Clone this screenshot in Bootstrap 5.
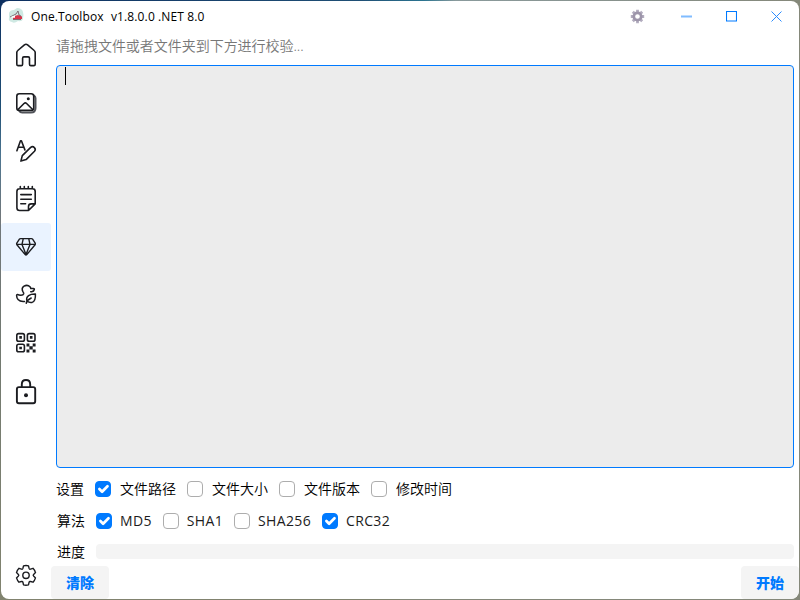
<!DOCTYPE html>
<html lang="zh-CN">
<head>
<meta charset="utf-8">
<meta name="viewport" content="width=device-width, initial-scale=1">
<title>One.Toolbox</title>
<link href="https://cdn.jsdelivr.net/npm/bootstrap@5.3.0/dist/css/bootstrap.min.css" rel="stylesheet">
<style>
:root { --accent: #007aff; }
body { width: 800px; height: 600px; padding: 1px; overflow: hidden; color: #000;
  font: 350 14px/20px "Noto Sans", "Noto Sans CJK SC", sans-serif;
  background: linear-gradient(90deg, #0d2f60, #1f4f75 45%, #2b7490 53%, #8a9a9c 57%, #85887a) top / 100% 1px no-repeat,
    linear-gradient(90deg, transparent 50%, #85887a 50%), linear-gradient(#0d2f60, #1f4f75 18%, #4d7590 26%, #70777b 36%, #737a70 60%, #81836f); }
.app-window { height: 598px; background: #fff; border-radius: 8px; }
.title-bar { height: 30px; padding-left: 7px; font: 400 12px/16px "Open Sans", sans-serif; color: #000; }
.title-name { width: 73px; margin-left: 7px; padding-top: 1px; letter-spacing: .1px; }
.title-version { margin-left: 7px; padding-top: 1px; letter-spacing: .12px; }
.caption-btn { width: 45px; height: 30px; padding: 0; border: 0; }
.caption-gear { margin-right: 4px; }
.side-nav { width: 50px; }
.side-link { height: 48px; color: #1b1c20; border-radius: 3px; }
.side-link.active { background: #eaf3ff; }
.side-link svg { fill: none; stroke: currentColor; stroke-width: 1.6; stroke-linecap: round; stroke-linejoin: round; overflow: visible; }
.side-link.active svg { stroke-width: 1.4; }
.side-link .solid { fill: currentColor; stroke: none; }
.page-body { padding: 0 5px; }
.hint-text { height: 34px; padding-top: 5px; color: #777; letter-spacing: -.03px; }
.drop-box { height: 403px; padding: 0 8px; resize: none; background: #ececec; border: 1px solid var(--accent); border-radius: 4px; }
.drop-wrap::after { content: ""; position: absolute; left: 9px; top: 2px; width: 1px; height: 18px; background: #000; }
.option-row { height: 32px; padding-left: 1px; }
.option-row.first { margin-top: 5px; padding-left: 0; }
.row-title { width: 39px; }
.option-row .form-check-input { width: 16px; height: 16px; margin: 0 9px 0 0; border: 1px solid #adadad; border-radius: 4px; }
.option-row .form-check-input:checked { background-color: var(--accent); border-color: var(--accent);
  background-size: 18px 18px; }
.opt { margin-right: 11px; }
.latin { font-family: "Open Sans", sans-serif; font-weight: 400; color: #1c1c1c; letter-spacing: .35px; }
.option-row .latin .form-check-input { margin-right: 8px; }
.progress-row { height: 29px; padding-left: 1px; }
.progress-row .progress { height: 15px; background: #f4f4f4; border-radius: 4px; }
.action-btn { width: 58px; height: 33px; padding: 1px 0 0; border: 0; border-radius: 4px; background: #f4f4f4; color: var(--accent); font-size: 14px; line-height: 20px; font-weight: 900; }
.action-btn:hover { background: #ececec; color: var(--accent); }
.action-btn.end { border-bottom-right-radius: 8px; }
</style>
<script src="https://cdn.jsdelivr.net/npm/bootstrap@5.3.0/dist/js/bootstrap.bundle.min.js"></script>
</head>
<body>
<div class="app-window d-flex flex-column overflow-hidden">
  <header class="title-bar d-flex align-items-center flex-shrink-0">
    <svg width="16" height="16" viewBox="0 0 16 16"><path d="M1 5Q2 2 6 2L9 0q5 0 6 4 1 3 0 7-1 3-5 2-4 3-6 1Q0 13 1 10Z" fill="#cfe9e3"/><path d="M5 8.500 10 7l4 1.500V11H5Z" fill="#d8344a"/><path d="m2 9 6-3 2-3 1 4 2 1M5 11.500h8" fill="none" stroke="#66505a" stroke-width=".8"/><path d="M3.500 8.500 7 7.500v2.300H3.500Z" fill="#fff"/></svg>
    <span class="title-name text-nowrap">One.Toolbox</span>
    <span class="title-version text-nowrap">v1.8.0.0 .NET 8.0</span>
    <div class="d-flex ms-auto">
      <button class="btn caption-btn caption-gear d-flex align-items-center justify-content-center" aria-label="选项"><svg width="15" height="15" viewBox="0 0 15 15"><g stroke="#b3adbf" stroke-width="2.8"><path d="M7.500.8v13.400M.8 7.500h13.400M2.800 2.800l9.400 9.400M12.200 2.800l-9.400 9.400"/></g><circle cx="7.500" cy="7.500" r="3.700" fill="#fff" stroke="#9d95aa" stroke-width="2.700"/></svg></button>
      <button class="btn caption-btn d-flex align-items-center justify-content-center" aria-label="最小化"><svg width="11" height="11"><path d="M0 5.500h11" stroke="#80bcff" stroke-width="2"/></svg></button>
      <button class="btn caption-btn d-flex align-items-center justify-content-center" aria-label="最大化"><svg width="11" height="11"><path d="M.5.500h10v9.500H.5Z" fill="none" stroke="#007aff" stroke-width="1.100"/></svg></button>
      <button class="btn caption-btn d-flex align-items-center justify-content-center" aria-label="关闭"><svg width="11" height="11"><path d="m.5.500 10 10m0-10-10 10" stroke="#2b8cff"/></svg></button>
    </div>
  </header>
  <div class="d-flex flex-grow-1">
    <nav class="side-nav d-flex flex-column flex-shrink-0">
      <a class="side-link d-flex align-items-center justify-content-center" aria-label="主页"><svg width="24" height="24" viewBox="0 0 24 24"><path d="M2.800 9.500q0-1.200 1-2l6.600-5.600q1.600-1.200 3.200 0l6.600 5.600q1 .8 1 2v11.700q0 1.400-1.400 1.400h-2.900q-1.400 0-1.400-1.400v-6q0-1.300-1.300-1.300H9.900q-1.300 0-1.300 1.300v6q0 1.400-1.400 1.400H4.200q-1.400 0-1.400-1.400Z"/></svg></a>
      <a class="side-link d-flex align-items-center justify-content-center" aria-label="图片"><svg width="24" height="24" viewBox="0 0 24 24"><path d="M20 4.600q1.500.9 1.500 2.700v9.700q0 4.600-4.600 4.600H8.200q-2 0-2.900-1.500" stroke="#505258" stroke-width="2"/><rect x="2.800" y="2.800" width="16.900" height="16.600" rx="2.500"/><path d="m4 18.500 6-6q1.300-1.200 2.600 0l6 6"/><circle class="solid" cx="14.300" cy="7.800" r="1.500"/></svg></a>
      <a class="side-link d-flex align-items-center justify-content-center" aria-label="文字"><svg width="24" height="24" viewBox="0 0 24 24"><path d="M2.900 11.800 6.500 1.700h.9l3.500 9.200M4.200 8.300h5.600M6.900 22.100l1.400-5.500 8.400-8.200q1.900-1.500 3.700.2 1.700 1.800.1 3.700l-8.400 8.300Z"/></svg></a>
      <a class="side-link d-flex align-items-center justify-content-center" aria-label="记事本"><svg width="24" height="24" viewBox="0 0 24 24"><path d="M14.500 23.500H5.600q-2.700 0-2.700-2.700V4.400q0-2.600 2.700-2.600h12.900q2.700 0 2.700 2.600v12.500l-6.700 6.600v-4q0-2.600 2.700-2.600h4M6.300-.5v2.200M10.300-.5v2.200M14.300-.5v2.200M18.300-.5v2.200M6.800 7.600h10.500M6.800 12.200h10.500M6.800 16.800h4.800"/></svg></a>
      <a class="side-link active d-flex align-items-center justify-content-center" aria-label="校验"><svg width="24" height="24" viewBox="0 0 24 24"><path d="M6.700 3.600h10.700q.8 0 1.200.6l2.600 4q.5.8-.1 1.500l-8.300 9.900q-.8.900-1.600 0L2.900 9.700q-.6-.7-.1-1.500l2.600-4q.4-.6 1.300-.6ZM2.800 9.400h18.400M9.200 3.800 8 9.400l4 10.200M14.800 3.800 16 9.400l-4 10.200"/></svg></a>
      <a class="side-link d-flex align-items-center justify-content-center" aria-label="生态"><svg width="24" height="24" viewBox="0 0 24 24"><path d="M10.500 18.400H9.100q-6.400-.4-6.500-6 0-1 .8-1 1.300.8 3.500.8 2.400 0 2.800-1.400.2-.8-.7-1.900Q7 5.200 10 3.200q3.500-2 6.200.8.500.7.600 1.600h2.700q1 0 .8.900-.4 1.900-2.600 2.200h-1M12.200 20.300q.8-3.300 5-5.300M13 18.200q-1.200-3.600 1.600-5.600 2.300-1.600 6.800-1.500.4 7.200-3.300 8.300-2.500.6-5.100-1.200Z" stroke-width="1.500"/></svg></a>
      <a class="side-link d-flex align-items-center justify-content-center" aria-label="二维码"><svg width="24" height="24" viewBox="0 0 24 24"><rect x="2.800" y="2.600" width="7.600" height="7.600" rx="1.800"/><rect x="13.400" y="2.600" width="7.600" height="7.600" rx="1.800"/><rect x="2.800" y="13.200" width="7.600" height="7.600" rx="1.800"/><path class="solid" d="M5.300 5.100h2.600v2.600H5.300zM15.900 5.100h2.600v2.600h-2.600zM5.300 15.700h2.600v2.600H5.300zM12.500 12.500h2.900v2.900h-2.900zM18.700 12.500h2.900v2.900h-2.900zM15.400 15.300h3.300v3.200h-3.300zM12.500 18.500h2.900v2.900h-2.900zM18.700 18.500h2.900v2.900h-2.900z"/></svg></a>
      <a class="side-link d-flex align-items-center justify-content-center" aria-label="加密"><svg width="24" height="24" viewBox="0 0 24 24"><g stroke-width="1.900"><rect x="2.900" y="8.100" width="18.300" height="16.200" rx="2"/><path d="M7.800 8V5.400Q7.800 1 12 1t4.200 4.400V8"/></g><circle class="solid" cx="12" cy="16.200" r="2"/></svg></a>
      <a class="side-link mt-auto d-flex align-items-center justify-content-center" aria-label="设置"><svg width="24" height="24" viewBox="0 0 24 24"><path d="M9.500 2.900q2.500-.8 5 0l.6 2.500q.3 1 1.400.7l2.500-.8q1.700 1.700 2.500 4.300l-1.900 1.800q-.8.900 0 1.700l1.900 1.800q-.8 2.600-2.500 4.300l-2.500-.7q-1.100-.3-1.400.7l-.6 2.600q-2.500.8-5 0l-.6-2.600q-.3-1-1.400-.7l-2.500.7q-1.700-1.700-2.500-4.300l1.900-1.800q.8-.8 0-1.700L2.500 9.600q.8-2.600 2.500-4.300l2.500.8q1.100.3 1.400-.7Z" stroke-width="1.400"/><circle cx="12" cy="12.300" r="3.200" stroke-width="1.400"/></svg></a>
    </nav>
    <main class="flex-grow-1 d-flex flex-column">
      <div class="page-body">
        <div class="hint-text">请拖拽文件或者文件夹到下方进行校验...</div>
        <div class="drop-wrap position-relative"><textarea class="drop-box d-block w-100" aria-label="文件"></textarea></div>
        <div class="option-row first d-flex align-items-center">
          <span class="row-title">设置</span>
          <label class="opt d-flex align-items-center"><input class="form-check-input" type="checkbox" checked>文件路径</label>
          <label class="opt d-flex align-items-center"><input class="form-check-input" type="checkbox">文件大小</label>
          <label class="opt d-flex align-items-center"><input class="form-check-input" type="checkbox">文件版本</label>
          <label class="opt d-flex align-items-center"><input class="form-check-input" type="checkbox">修改时间</label>
        </div>
        <div class="option-row d-flex align-items-center">
          <span class="row-title">算法</span>
          <label class="opt latin d-flex align-items-center"><input class="form-check-input" type="checkbox" checked>MD5</label>
          <label class="opt latin d-flex align-items-center"><input class="form-check-input" type="checkbox">SHA1</label>
          <label class="opt latin d-flex align-items-center"><input class="form-check-input" type="checkbox">SHA256</label>
          <label class="opt latin d-flex align-items-center"><input class="form-check-input" type="checkbox" checked>CRC32</label>
        </div>
        <div class="progress-row d-flex align-items-center">
          <span class="row-title">进度</span>
          <div class="progress flex-grow-1" role="progressbar" aria-label="进度"></div>
        </div>
      </div>
      <div class="d-flex justify-content-between mt-auto">
        <button class="btn action-btn">清除</button>
        <button class="btn action-btn end">开始</button>
      </div>
    </main>
  </div>
</div>
</body>
</html>
